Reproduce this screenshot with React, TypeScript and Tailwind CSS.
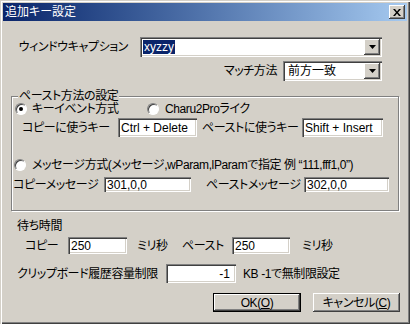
import type { ReactNode } from 'react';

const font = "[font-family:'Liberation_Sans','Noto_Sans_CJK_JP',sans-serif] [font-feature-settings:'palt']";

const sunken =
  'bg-white shadow-[inset_1px_1px_0_#808080,inset_2px_2px_0_#404040,inset_-1px_-1px_0_#fff,inset_-2px_-2px_0_#d4d0c8]';
const raised =
  'bg-[#d4d0c8] shadow-[inset_-1px_-1px_0_#404040,inset_1px_1px_0_#fff,inset_-2px_-2px_0_#808080]';

function Edit({ value, className, right }: { value: string; className: string; right?: boolean }) {
  return (
    <div
      className={`${sunken} ${className} flex items-center px-[3px] text-[12px] leading-none tracking-normal text-black ${
        right ? 'justify-end pr-[6px]' : ''
      }`}
    >
      {value}
    </div>
  );
}

function Combo({ children, className }: { children: ReactNode; className: string }) {
  return (
    <div className={`${sunken} ${className} flex items-center p-[2px]`}>
      <div className="flex flex-1 items-center pl-[1px] text-[12px] leading-none tracking-normal">{children}</div>
      <div className={`${raised} flex h-full w-[16px] items-center justify-center`}>
        <svg width="7" height="4" viewBox="0 0 7 4">
          <path d="M0 0h7L3.5 4z" fill="#000" />
        </svg>
      </div>
    </div>
  );
}

function Radio({ checked }: { checked?: boolean }) {
  return (
    <div className="flex h-[12px] w-[12px] items-center justify-center rounded-full border border-t-[#808080] border-l-[#808080] border-r-white border-b-white bg-white shadow-[inset_1px_1px_0_#404040]">
      {checked && <div className="h-[4px] w-[4px] rounded-full bg-black" />}
    </div>
  );
}

export default function App() {
  return (
    <div
      className={`${font} flex h-[324px] w-[410px] flex-col whitespace-nowrap bg-[#d4d0c8] p-[3px] text-[12px] leading-none tracking-[-0.4px] text-black shadow-[inset_1px_1px_0_#d4d0c8,inset_2px_2px_0_#fff,inset_-1px_-1px_0_#404040,inset_-2px_-2px_0_#808080]`}
    >
      {/* title bar */}
      <div className="flex h-[18px] items-center justify-between bg-gradient-to-r from-[#0a246a] to-[#a6caf0] pl-[2px] pr-[2px]">
        <span className="text-[12px] tracking-normal text-white">追加キー設定</span>
        <div className={`${raised} flex h-[14px] w-[16px] items-center justify-center`}>
          <svg width="8" height="7" viewBox="0 0 8 7">
            <path d="M0 0h2l2 2.5L6 0h2L5 3.5 8 7H6L4 4.5 2 7H0l3-3.5z" fill="#000" />
          </svg>
        </div>
      </div>

      {/* window caption */}
      <div className="mt-[16px] flex h-[20px] items-center">
        <span className="w-[125px] text-right">ウィンドウキャプション</span>
        <Combo className="ml-[12px] h-[20px] w-[242px]">
          <span className="bg-[#0a246a] px-[1px] py-[1px] text-white">xyzzy</span>
        </Combo>
      </div>

      <div className="mt-[4px] flex h-[20px] items-center">
        <span className="w-[274px] text-right">マッチ方法</span>
        <Combo className="ml-[6px] h-[20px] w-[99px]">
          <span className="pl-[2px]">前方一致</span>
        </Combo>
      </div>

      {/* paste group */}
      <div className="relative ml-[8px] mt-[15px] h-[115px] w-[388px] border border-[#808080] shadow-[inset_1px_1px_0_#fff,1px_1px_0_#fff]">
        <span className="absolute left-[6px] top-[-7px] bg-[#d4d0c8] px-[1px]">ペースト方法の設定</span>

        <div className="mt-[5px] flex h-[14px] items-center">
          <div className="ml-[3px] flex w-[132px] items-center">
            <Radio checked />
            <span className="ml-[5px]">キーイベント方式</span>
          </div>
          <Radio />
          <span className="ml-[6px]">Charu2Proライク</span>
        </div>

        <div className="mt-[2px] flex h-[19px] items-center">
          <span className="ml-[10px] w-[96px]">コピーに使うキー</span>
          <Edit value="Ctrl + Delete" className="h-[19px] w-[79px]" />
          <span className="ml-[5px] w-[100px]">ペーストに使うキー</span>
          <Edit value="Shift + Insert" className="h-[19px] w-[81px]" />
        </div>

        <div className="mt-[21px] flex h-[14px] items-center">
          <div className="ml-[2px]">
            <Radio />
          </div>
          <span className="ml-[6px]">
            メッセージ方式(メッセージ,wParam,lParamで指定 例 “111,fff1,0”)
          </span>
        </div>

        <div className="mt-[5px] flex h-[15px] items-center">
          <span className="ml-[1px] w-[91px]">コピーメッセージ</span>
          <Edit value="301,0,0" className="h-[15px] w-[87px]" />
          <span className="ml-[15px] w-[98px]">ペーストメッセージ</span>
          <Edit value="302,0,0" className="h-[15px] w-[85px]" />
        </div>
      </div>

      {/* wait time */}
      <div className="ml-[14px] mt-[8px] flex h-[14px] items-center">待ち時間</div>

      <div className="mt-[4px] flex h-[17px] items-center">
        <span className="ml-[22px] w-[43px]">コピー</span>
        <Edit value="250" className="h-[17px] w-[59px]" />
        <span className="ml-[10px] w-[45px]">ミリ秒</span>
        <span className="w-[50px]">ペースト</span>
        <Edit value="250" className="h-[17px] w-[58px]" />
        <span className="ml-[12px]">ミリ秒</span>
      </div>

      <div className="mt-[10px] flex h-[19px] items-center">
        <span className="ml-[14px] w-[149px]">クリップボード履歴容量制限</span>
        <Edit value="-1" right className="h-[19px] w-[70px]" />
        <span className="ml-[7px]">KB -1で無制限設定</span>
      </div>

      <div className="mt-[10px] flex h-[19px] items-center">
        <button
          className={`ml-[210px] flex h-[19px] w-[88px] items-center justify-center border border-black ${raised}`}
        >
          OK(<u>O</u>)
        </button>
        <button className={`ml-[12px] flex h-[19px] w-[87px] items-center justify-center ${raised}`}>
          キャンセル(<u>C</u>)
        </button>
      </div>
    </div>
  );
}
